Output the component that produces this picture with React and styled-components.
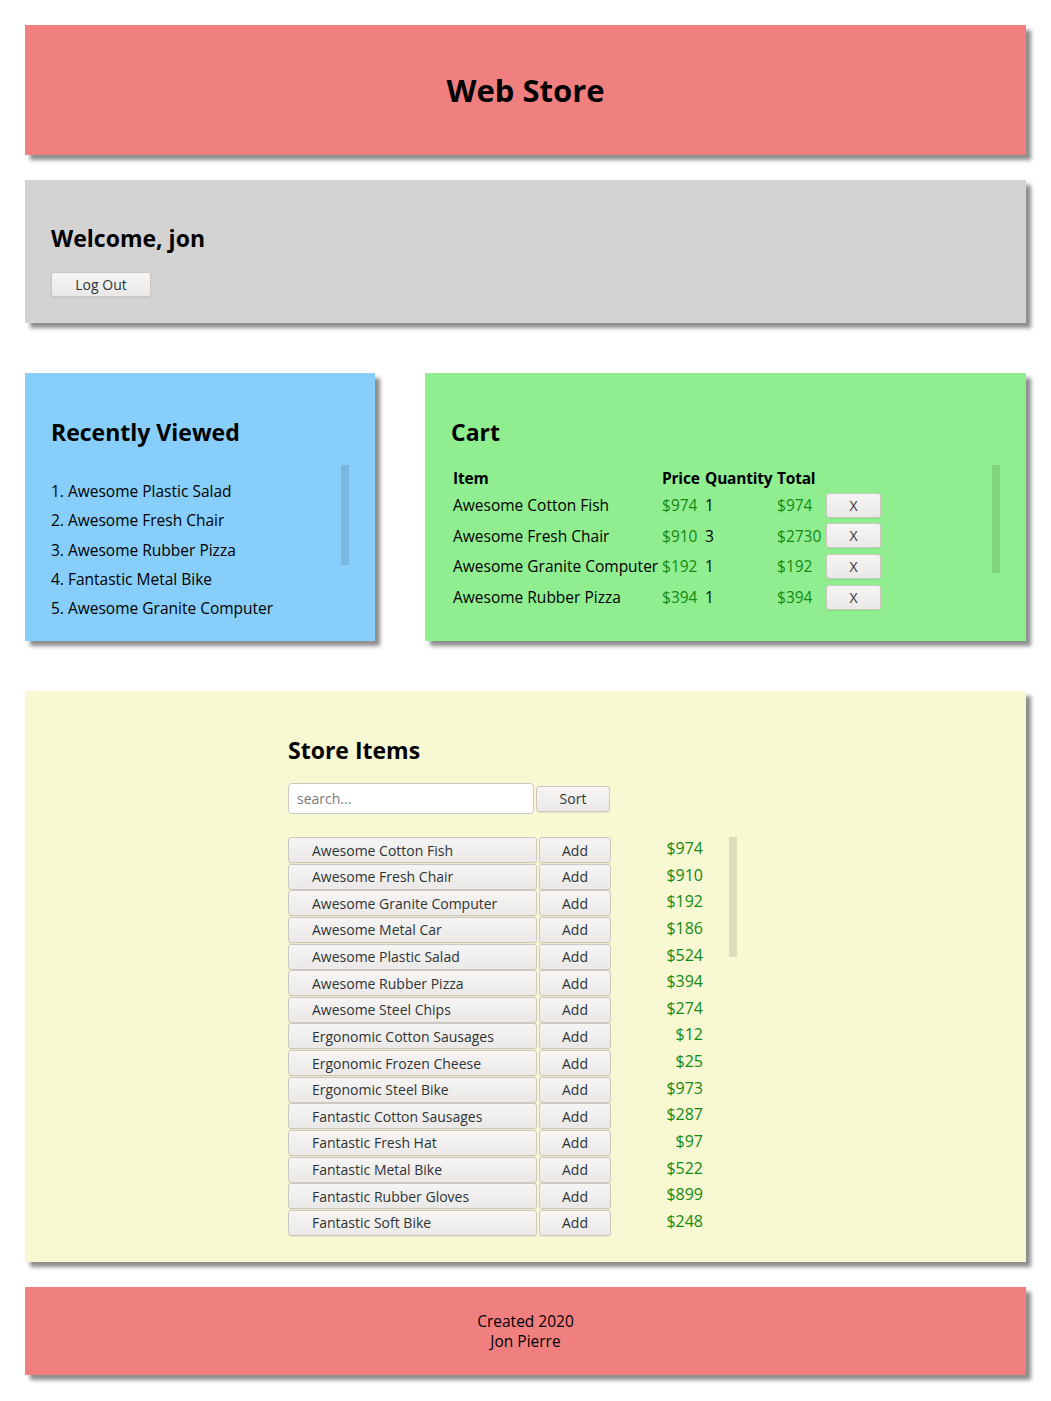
import React from 'react'
import styled, { createGlobalStyle } from 'styled-components'

const font = '"Open Sans", "Noto Sans", sans-serif'
const green = '#138a13'

const GlobalStyle = createGlobalStyle`
  body {
    margin: 0;
    background: #fff;
    font-family: ${font};
    color: #000;
  }
  * { box-sizing: border-box; }
`

const Page = styled.div`
  display: flex;
  flex-direction: column;
  gap: 25px;
  padding: 25px 25px 26px;
`

const Panel = styled.section`
  position: relative;
  background: ${(p) => p.bg};
  box-shadow: 5px 5px 4px rgba(0, 0, 0, 0.45);
`

const Header = styled(Panel)`
  height: 130px;
  display: flex;
  align-items: center;
  justify-content: center;

  h1 {
    margin: 0;
    font-size: 31px;
    font-weight: 700;
    line-height: 36px;
  }
`

const Welcome = styled(Panel)`
  padding: 44px 26px 26px;
`

const Heading = styled.h2`
  margin: 0;
  font-size: 23px;
  font-weight: 700;
  line-height: 28px;
`

const WelcomeHeading = styled(Heading)`
  margin-bottom: 20px;
`

const Button = styled.button`
  font-family: ${font};
  font-size: 14px;
  color: #2e3436;
  background: linear-gradient(#f6f5f4, #ebe9e7);
  border: 1px solid #cdc7c2;
  border-radius: 3px;
  box-shadow: 0 1px 1px rgba(0, 0, 0, 0.07);
  padding: 0;
  cursor: pointer;
`

const LogOut = styled(Button)`
  width: 100px;
  height: 25px;
`

const Row = styled.div`
  display: grid;
  grid-template-columns: 350px 1fr;
  gap: 50px;
  margin: 25px 0;
`

const Card = styled(Panel)`
  height: 268px;
  padding: 45px 26px 26px;
`

const Scroll = styled.div`
  position: relative;
  width: ${(p) => (p.w ? `${p.w}px` : 'auto')};
  height: ${(p) => p.h}px;
  margin-top: ${(p) => (p.flush ? 0 : 19)}px;
  overflow: ${(p) => (p.open ? 'visible' : 'hidden')};
`

const Thumb = styled.div`
  position: absolute;
  right: 0;
  top: 0;
  width: 8px;
  height: ${(p) => p.h}px;
  background: rgba(0, 0, 0, 0.1);
`

const Recent = styled.ol`
  margin: 0;
  padding: 12px 0 0;
  list-style-position: inside;
  font-size: 15.5px;
  line-height: 29.25px;
`

const CartGrid = styled.div`
  display: grid;
  grid-template-columns: 207px 41px 70px 47px 55px;
  grid-auto-rows: 30.6px;
  grid-template-rows: 25px;
  column-gap: 2px;
  padding-left: 2px;
  align-items: center;
  font-size: 15.5px;
  white-space: nowrap;
`

const Th = styled.div`
  font-weight: 700;
  letter-spacing: -0.2px;
`

const Money = styled.div`
  color: ${green};
`

const RemoveBtn = styled(Button)`
  width: 55px;
  height: 25px;
  font-size: 14px;
`

const Store = styled(Panel)`
  padding: 45px 0 25px 263px;
`

const SearchRow = styled.div`
  display: flex;
  align-items: center;
  gap: 2px;
  margin: 19px 0 23px;
`

const Search = styled.input`
  width: 246px;
  height: 31px;
  padding: 0 8px;
  font-family: ${font};
  font-size: 14px;
  border: 1px solid #cdc7c2;
  border-radius: 4px;
  background: #fff;
  &::placeholder { color: #7a7a7a; }
`

const SortBtn = styled(Button)`
  width: 74px;
  height: 26px;
`

const Items = styled.div`
  display: grid;
  grid-template-columns: 249px 72px 90px;
  grid-auto-rows: 26.64px;
  column-gap: 2px;
`

const ItemBtn = styled(Button)`
  height: 26px;
  text-align: left;
  padding-left: 23px;
  white-space: nowrap;
`

const AddBtn = styled(Button)`
  height: 26px;
`

const Price = styled.div`
  color: ${green};
  font-size: 16px;
  line-height: 18px;
  padding-top: 2px;
  text-align: right;
`

const Footer = styled(Panel)`
  height: 88px;
  display: flex;
  flex-direction: column;
  align-items: center;
  justify-content: center;
  font-size: 15.5px;
  line-height: 20px;
`

const recent = [
  'Awesome Plastic Salad',
  'Awesome Fresh Chair',
  'Awesome Rubber Pizza',
  'Fantastic Metal Bike',
  'Awesome Granite Computer',
]

const cart = [
  ['Awesome Cotton Fish', 974, 1],
  ['Awesome Fresh Chair', 910, 3],
  ['Awesome Granite Computer', 192, 1],
  ['Awesome Rubber Pizza', 394, 1],
]

const items = [
  ['Awesome Cotton Fish', 974],
  ['Awesome Fresh Chair', 910],
  ['Awesome Granite Computer', 192],
  ['Awesome Metal Car', 186],
  ['Awesome Plastic Salad', 524],
  ['Awesome Rubber Pizza', 394],
  ['Awesome Steel Chips', 274],
  ['Ergonomic Cotton Sausages', 12],
  ['Ergonomic Frozen Cheese', 25],
  ['Ergonomic Steel Bike', 973],
  ['Fantastic Cotton Sausages', 287],
  ['Fantastic Fresh Hat', 97],
  ['Fantastic Metal Bike', 522],
  ['Fantastic Rubber Gloves', 899],
  ['Fantastic Soft Bike', 248],
]

export default function App() {
  return (
    <Page>
      <GlobalStyle />
      <Header bg="#f08080">
        <h1>Web Store</h1>
      </Header>

      <Welcome bg="#d3d3d3">
        <WelcomeHeading>Welcome, jon</WelcomeHeading>
        <LogOut>Log Out</LogOut>
      </Welcome>

      <Row>
        <Card bg="#87cefa">
          <Heading>Recently Viewed</Heading>
          <Scroll h={152} open>
            <Recent>
              {recent.map((r) => (
                <li key={r}>{r}</li>
              ))}
            </Recent>
            <Thumb h={100} />
          </Scroll>
        </Card>

        <Card bg="#90ee90">
          <Heading>Cart</Heading>
          <Scroll h={151}>
            <CartGrid>
              <Th>Item</Th>
              <Th>Price</Th>
              <Th>Quantity</Th>
              <Th>Total</Th>
              <div />
              {cart.map(([name, price, qty]) => (
                <React.Fragment key={name}>
                  <div>{name}</div>
                  <Money>${price}</Money>
                  <div>{qty}</div>
                  <Money>${price * qty}</Money>
                  <RemoveBtn>X</RemoveBtn>
                </React.Fragment>
              ))}
            </CartGrid>
            <Thumb h={108} />
          </Scroll>
        </Card>
      </Row>

      <Store bg="#f8f8d2">
        <Heading>Store Items</Heading>
        <SearchRow>
          <Search placeholder="search..." />
          <SortBtn>Sort</SortBtn>
        </SearchRow>
        <Scroll h={400} w={449} flush>
          <Items>
            {items.map(([name, price]) => (
              <React.Fragment key={name}>
                <ItemBtn>{name}</ItemBtn>
                <AddBtn>Add</AddBtn>
                <Price>${price}</Price>
              </React.Fragment>
            ))}
          </Items>
          <Thumb h={120} />
        </Scroll>
      </Store>

      <Footer bg="#f08080">
        <div>Created 2020</div>
        <div>Jon Pierre</div>
      </Footer>
    </Page>
  )
}
